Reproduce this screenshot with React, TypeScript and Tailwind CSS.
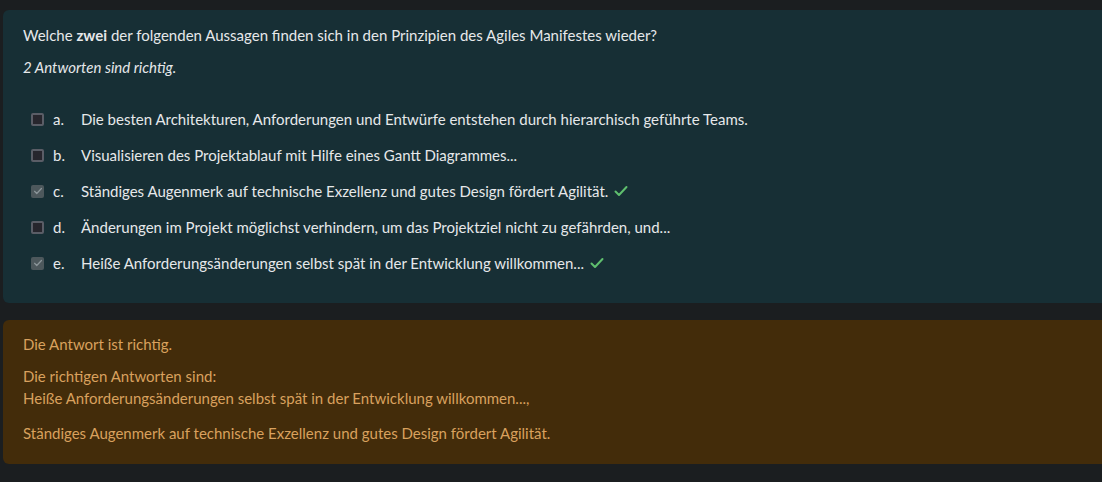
import React from 'react';

const options = [
  { letter: 'a.', text: 'Die besten Architekturen, Anforderungen und Entwürfe entstehen durch hierarchisch geführte Teams.', checked: false },
  { letter: 'b.', text: 'Visualisieren des Projektablauf mit Hilfe eines Gantt Diagrammes...', checked: false },
  { letter: 'c.', text: 'Ständiges Augenmerk auf technische Exzellenz und gutes Design fördert Agilität.', checked: true },
  { letter: 'd.', text: 'Änderungen im Projekt möglichst verhindern, um das Projektziel nicht zu gefährden, und...', checked: false },
  { letter: 'e.', text: 'Heiße Anforderungsänderungen selbst spät in der Entwicklung willkommen...', checked: true },
];

const Check = ({ className }: { className: string }) => (
  <svg viewBox="0 0 16 16" className={className} fill="none" stroke="currentColor" strokeWidth="2" strokeLinecap="round" strokeLinejoin="round">
    <path d="M2.5 8.5l3.5 3.5 7.5-8" />
  </svg>
);

const Box = ({ checked }: { checked: boolean }) =>
  checked ? (
    <span className="w-[13px] h-[13px] rounded-[2px] bg-[#4d585c] flex items-center justify-center text-[#8b9599]">
      <Check className="w-[10px] h-[10px]" />
    </span>
  ) : (
    <span className="w-[13px] h-[13px] rounded-[2px] bg-[#27262d] border-2 border-[#5a5d66]" />
  );

export default function App() {
  return (
    <div className="min-h-screen w-[1102px] bg-[#1b1e20] pt-[10px] pl-[3px] overflow-hidden font-['Lato','Liberation_Sans',sans-serif] text-[15px]">
      {/* Question card */}
      <div className="w-[1110px] bg-[#172f35] rounded-[6px] pl-5 pt-[14px] pb-[29px] text-[#e6e8ea]">
        <p className="leading-[22px]">
          Welche <b>zwei</b> der folgenden Aussagen finden sich in den Prinzipien des Agiles Manifestes wieder?
        </p>
        <p className="italic leading-[22px] mt-[10px]">2 Antworten sind richtig.</p>
        <div className="mt-[30px] flex flex-col gap-[14px]">
          {options.map((o) => (
            <div key={o.letter} className="flex items-center h-[22px] pl-[8px]">
              <Box checked={o.checked} />
              <span className="ml-[9px] w-[28px]">{o.letter}</span>
              <span>{o.text}</span>
              {o.checked && <Check className="ml-[5px] w-[16px] h-[16px] text-[#5fbf6e]" />}
            </div>
          ))}
        </div>
      </div>

      {/* Feedback card */}
      <div className="mt-[17px] w-[1110px] bg-[#432c0a] rounded-[6px] pl-5 pt-[13px] pb-[20px] text-[#d9a15e] leading-[22px]">
        <p>Die Antwort ist richtig.</p>
        <p className="mt-[10px]">Die richtigen Antworten sind:</p>
        <p>Heiße Anforderungsänderungen selbst spät in der Entwicklung willkommen...,</p>
        <p className="mt-[13px]">Ständiges Augenmerk auf technische Exzellenz und gutes Design fördert Agilität.</p>
      </div>
    </div>
  );
}
